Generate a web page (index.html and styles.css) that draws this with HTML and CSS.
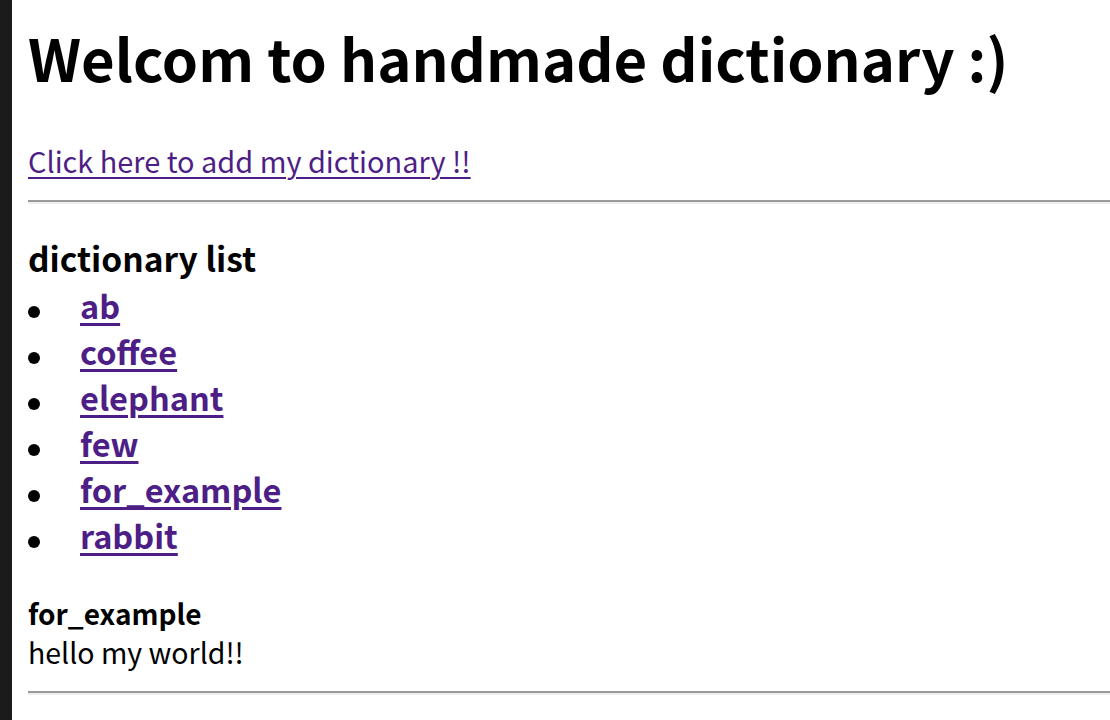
FILE: index.html
```html
<!DOCTYPE html>
<html lang="en">
<head>
<meta charset="utf-8">
<title>handmade dictionary</title>
<link rel="stylesheet" href="styles.css">
</head>
<body>
<div class="frame">
  <div class="strip"></div>
  <main class="page">
    <h1 class="title">Welcom to handmade dictionary :)</h1>
    <p class="add"><a href="#" class="link">Click here to add my dictionary !!</a></p>
    <hr class="rule rule-top">
    <h3 class="list-title">dictionary list</h3>
    <ul class="words">
      <li class="word"><a href="#" class="link word-link">ab</a></li>
      <li class="word"><a href="#" class="link word-link">coffee</a></li>
      <li class="word"><a href="#" class="link word-link">elephant</a></li>
      <li class="word"><a href="#" class="link word-link">few</a></li>
      <li class="word"><a href="#" class="link word-link">for_example</a></li>
      <li class="word"><a href="#" class="link word-link">rabbit</a></li>
    </ul>
    <h4 class="entry-title">for_example</h4>
    <div class="entry-text">hello my world!!</div>
    <hr class="rule rule-bottom">
  </main>
</div>
</body>
</html>
```

FILE: styles.css
```css
html, body {
  margin: 0;
  padding: 0;
  background: #ffffff;
}

body {
  font-family: "Noto Sans CJK KR", "Noto Sans", sans-serif;
  color: #000000;
  overflow: hidden;
}

.frame {
  display: flex;
  min-height: 720px;
}

.strip {
  flex: 0 0 12px;
  background: #1b1b1b;
}

.page {
  flex: 1;
  padding: 20px 0 0 16px;
  min-width: 0;
}

.title {
  margin: 0;
  font-size: 58px;
  line-height: 74px;
  font-weight: 700;
  white-space: nowrap;
}

.add {
  margin: 46px 0 0;
  font-size: 28.9px;
  line-height: 40px;
}

.link {
  color: #4d1e85;
  text-decoration: underline;
  text-decoration-thickness: 2px;
  text-underline-offset: 4px;
}

.rule {
  margin: 0;
  height: 0;
  border: 0;
  border-top: 2px solid #9a9a9a;
  border-bottom: 2px solid #eeeeee;
  margin-right: -40px;
}

.rule-top {
  margin-top: 20px;
}

.list-title {
  margin: 32px 0 0;
  font-size: 33.5px;
  line-height: 44px;
  font-weight: 700;
}

.words {
  margin: 2px 0 0;
  padding: 0;
  list-style: none;
}

.word {
  display: flex;
  align-items: flex-start;
  font-size: 32.5px;
  line-height: 46px;
  font-weight: 700;
}

.word::before {
  content: "";
  flex: 0 0 12px;
  height: 12px;
  margin-top: 24px;
  margin-right: 40px;
  border-radius: 50%;
  background: #000000;
}

.word-link {
  text-decoration-thickness: 3px;
}

.entry-title {
  margin: 36px 0 0;
  font-size: 28px;
  line-height: 38px;
  font-weight: 700;
}

.entry-text {
  font-size: 28.5px;
  line-height: 40px;
}

.rule-bottom {
  margin-top: 19px;
}
```
